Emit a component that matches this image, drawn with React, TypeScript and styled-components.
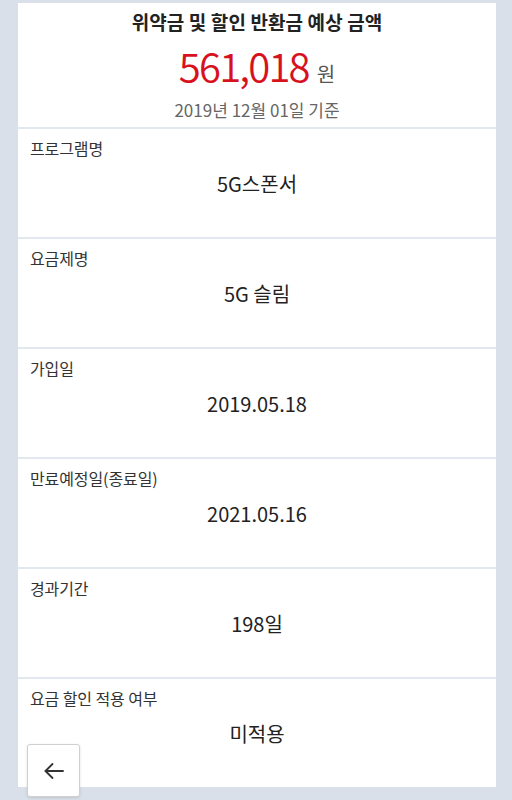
import React from "react";
import styled, { createGlobalStyle } from "styled-components";

const Global = createGlobalStyle`
  html, body { margin: 0; padding: 0; background: #d9e0e9; }
  body { font-family: "Noto Sans CJK KR", "Noto Sans", sans-serif; }
`;

const Page = styled.div`
  min-height: 800px;
  padding: 3px 16px 0 18px;
  box-sizing: border-box;
`;

const Card = styled.div`
  background: #fff;
  display: flex;
  flex-direction: column;
`;

const Summary = styled.section`
  display: flex;
  flex-direction: column;
  align-items: center;
  padding: 6px 0 5px;
`;

const Title = styled.h1`
  margin: 0;
  font-size: 19px;
  line-height: 26px;
  font-weight: 700;
  color: #222;
  letter-spacing: 0.1px;
`;

const AmountLine = styled.div`
  margin-top: 6px;
  display: flex;
  align-items: baseline;
  gap: 8px;
  height: 48px;
`;

const Amount = styled.span`
  font-size: 40px;
  line-height: 48px;
  color: #d7111e;
  font-weight: 350;
  letter-spacing: -1.8px;
`;

const Unit = styled.span`
  font-size: 20px;
  color: #555;
`;

const DateText = styled.div`
  margin-top: 9px;
  font-size: 17px;
  line-height: 24px;
  color: #666;
  letter-spacing: 0;
`;

const Row = styled.div`
  border-top: 2px solid #e2e8f0;
  padding: 8px 12px 39px;
  display: flex;
  flex-direction: column;
  gap: 11px;
`;

const Label = styled.div`
  font-size: 16px;
  line-height: 22px;
  color: #333;
  letter-spacing: -0.1px;
`;

const Value = styled.div`
  font-size: 20px;
  line-height: 28px;
  color: #222;
  text-align: center;
  letter-spacing: 0;
`;

const BackButton = styled.button`
  position: fixed;
  left: 27px;
  bottom: 3px;
  width: 53px;
  height: 53px;
  background: #fff;
  border: 1px solid #d0d0d0;
  border-radius: 3px;
  box-shadow: 0 1px 3px rgba(0, 0, 0, 0.12);
  display: flex;
  align-items: center;
  justify-content: center;
  padding: 0;
  cursor: pointer;
`;

const rows = [
  ["프로그램명", "5G스폰서"],
  ["요금제명", "5G 슬림"],
  ["가입일", "2019.05.18"],
  ["만료예정일(종료일)", "2021.05.16"],
  ["경과기간", "198일"],
  ["요금 할인 적용 여부", "미적용"],
];

export default function App() {
  return (
    <>
      <Global />
      <Page>
        <Card>
          <Summary>
            <Title>위약금 및 할인 반환금 예상 금액</Title>
            <AmountLine>
              <Amount>561,018</Amount>
              <Unit>원</Unit>
            </AmountLine>
            <DateText>2019년 12월 01일 기준</DateText>
          </Summary>
          {rows.map(([l, v]) => (
            <Row key={l}>
              <Label>{l}</Label>
              <Value>{v}</Value>
            </Row>
          ))}
        </Card>
      </Page>
      <BackButton aria-label="back">
        <svg width="24" height="24" viewBox="0 0 24 24" fill="none" stroke="#333" strokeWidth="1.8" strokeLinecap="round" strokeLinejoin="round">
          <path d="M21 12H3.5" />
          <path d="M10.5 5l-7 7 7 7" />
        </svg>
      </BackButton>
    </>
  );
}
